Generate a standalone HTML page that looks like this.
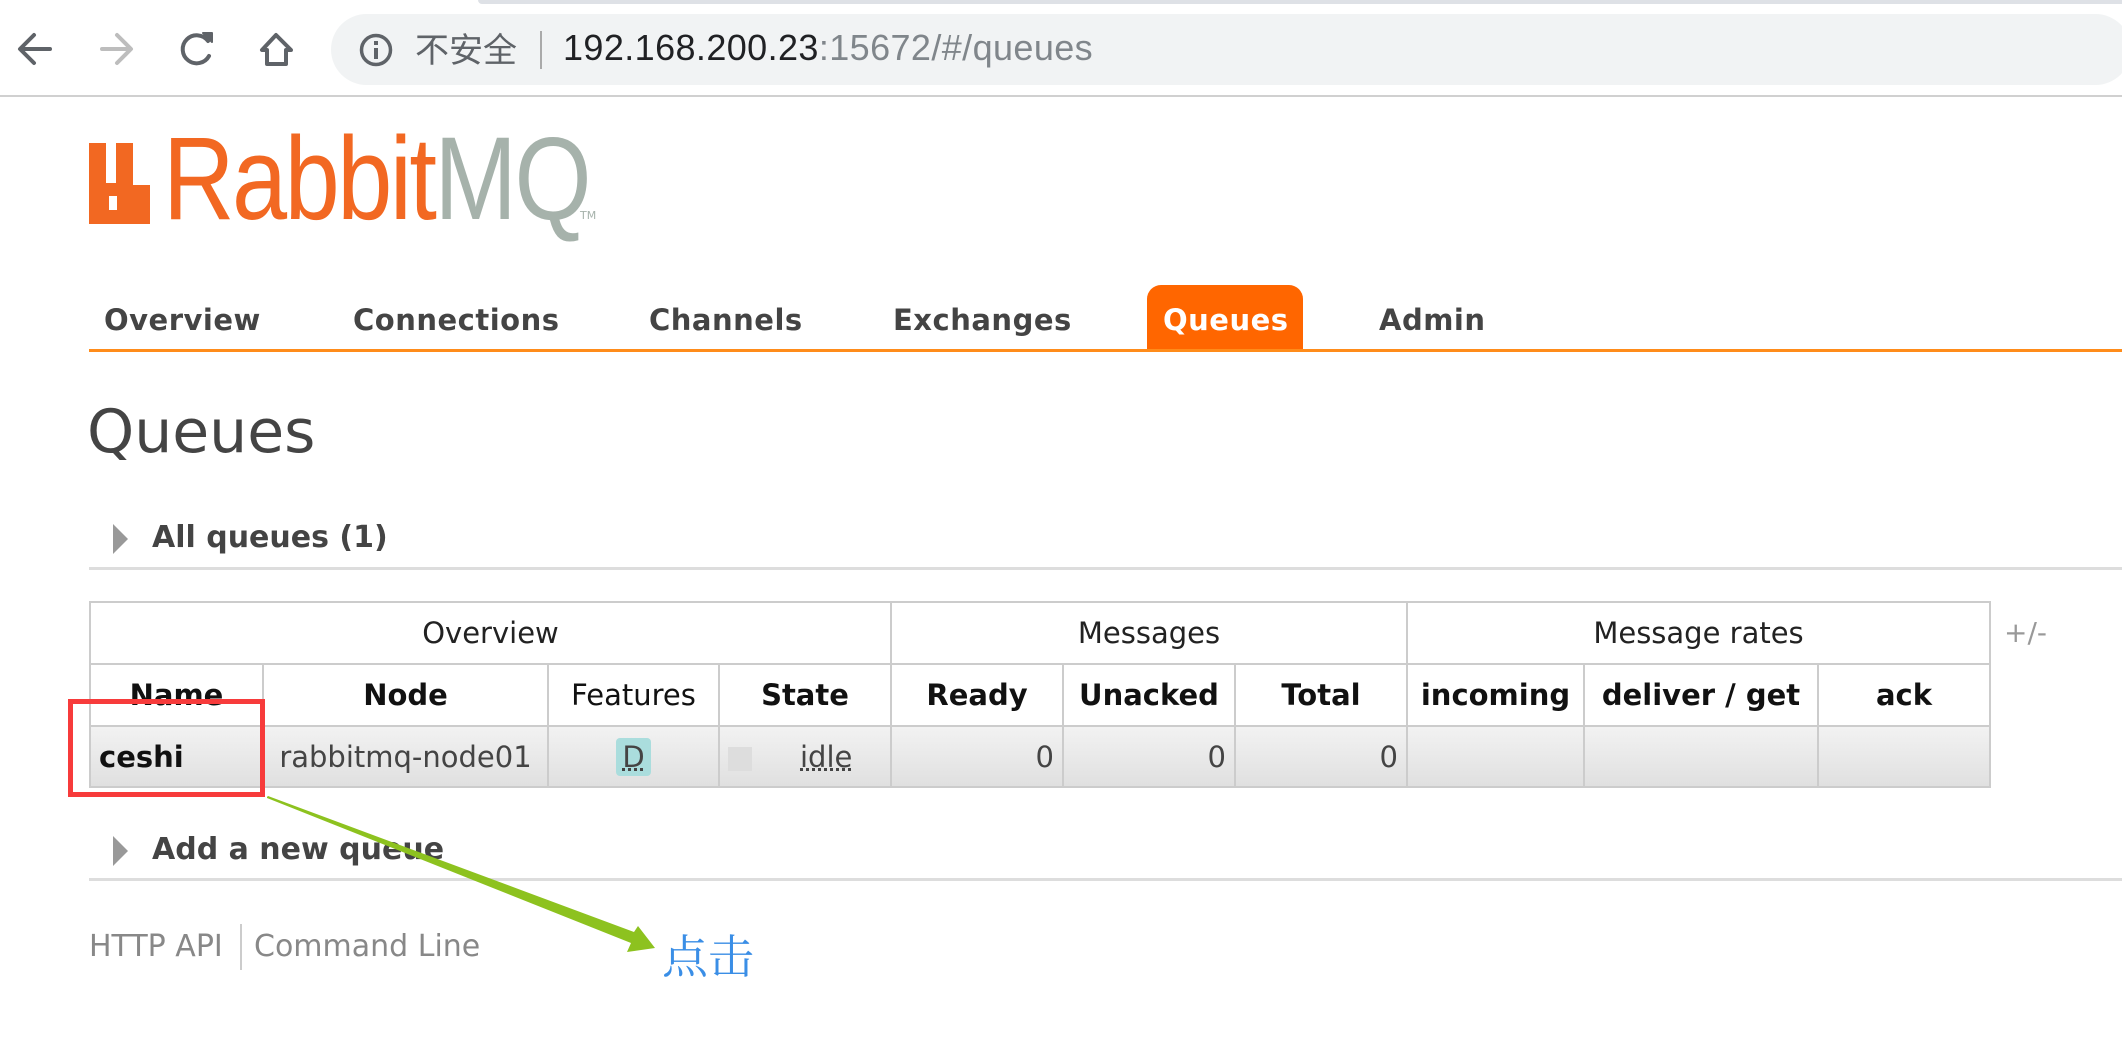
<!DOCTYPE html>
<html><head><meta charset="utf-8">
<style>
*{margin:0;padding:0;box-sizing:border-box}
body{width:2122px;height:1038px;background:#fff;position:relative;overflow:hidden;font-family:"DejaVu Sans","Liberation Sans",sans-serif;color:#444}
.abs{position:absolute}
.tab{position:absolute;top:303px;font-weight:bold;font-size:29px;color:#444;letter-spacing:0.5px}
table{position:absolute;left:89px;top:601px;border-collapse:collapse;font-size:29px}
td,th{border:2px solid #ccc;text-align:center;padding:0 8px;white-space:nowrap}
tr.h1 td{height:62px;font-weight:normal;color:#222}
tr.h2 th{height:62px;color:#111}
tr.d td{height:61px;background:linear-gradient(#f2f2f2,#e0e0e0);color:#444}
</style></head><body>
<div class="abs" style="left:478px;top:0;width:1644px;height:4px;background:#dee1e6;border-radius:0 0 0 6px"></div>
<svg class="abs" style="left:0;top:0" width="330" height="96">
 <g fill="none" stroke-width="4" stroke-linecap="round" stroke-linejoin="round">
  <path d="M50 49H21M34 35L20 49L34 63" stroke="#5f6368"/>
  <path d="M102 49H130M117 35L131 49L117 63" stroke="#bdbdbd"/>
  <path d="M208 41A14 14 0 1 0 209 56" stroke="#5f6368"/>
  <path d="M203 33L212 33L212 42Z" fill="#5f6368" stroke="#5f6368" stroke-width="2"/>
  <path d="M276 35L262 50H267V64H286V50H291Z" stroke="#5f6368"/>
 </g>
</svg>
<div class="abs" style="left:331px;top:14px;width:1800px;height:71px;background:#f1f3f4;border-radius:36px"></div>
<svg class="abs" style="left:358px;top:32px" width="36" height="36"><circle cx="18" cy="18" r="14.5" fill="none" stroke="#5f6368" stroke-width="3.5"/><rect x="16" y="16" width="4" height="11" fill="#5f6368"/><rect x="16" y="9" width="4" height="4" fill="#5f6368"/></svg>
<div class="abs" style="left:415px;top:25px;font-size:34px;color:#5f6368;font-family:'Noto Sans CJK SC',sans-serif;line-height:46px">不安全</div>
<div class="abs" style="left:540px;top:31px;width:2px;height:38px;background:#aaa"></div>
<div class="abs" style="left:563px;top:24px;font-size:36px;line-height:48px;font-family:'Liberation Sans',sans-serif;color:#202124;letter-spacing:0.4px">192.168.200.23<span style="color:#80868b">:15672/#/queues</span></div>
<div class="abs" style="left:0;top:95px;width:2122px;height:2px;background:#d0d0d0"></div>
<svg class="abs" style="left:89px;top:138px" width="80" height="87"><path d="M0 5H17V45H27V5H44V47H61V86H0Z" fill="#f26822"/><rect x="20" y="58" width="8" height="14" fill="#fff"/></svg>
<div class="abs" style="left:163px;top:120px;font-size:118px;line-height:118px;font-family:'Liberation Sans',sans-serif;letter-spacing:-3px;transform:scaleX(0.84);transform-origin:left"><span style="color:#f26822">Rabbit</span><span style="color:#a6b2ab">MQ</span></div>
<div class="abs" style="left:580px;top:209px;font-size:11px;color:#a6b2ab">TM</div>
<div class="tab" style="left:104px">Overview</div>
<div class="tab" style="left:353px">Connections</div>
<div class="tab" style="left:649px">Channels</div>
<div class="tab" style="left:893px">Exchanges</div>
<div class="abs" style="left:1147px;top:285px;width:156px;height:66px;background:#ff6600;border-radius:14px 14px 0 0"></div>
<div class="tab" style="left:1163px;color:#fff">Queues</div>
<div class="tab" style="left:1379px">Admin</div>
<div class="abs" style="left:89px;top:349px;width:2033px;height:3px;background:#ff8c1a"></div>
<div class="abs" style="left:87px;top:396px;font-size:60px;color:#444;line-height:72px">Queues</div>
<svg class="abs" style="left:113px;top:524px" width="16" height="30"><path d="M0 0L15 15L0 30Z" fill="#999"/></svg>
<div class="abs" style="left:152px;top:520px;font-size:30px;font-weight:bold;color:#444">All queues (1)</div>
<div class="abs" style="left:89px;top:567px;width:2033px;height:3px;background:#ddd"></div>
<table>
<tr class="h1"><td colspan="4">Overview</td><td colspan="3">Messages</td><td colspan="3">Message rates</td></tr>
<tr class="h2"><th style="width:173px">Name</th><th style="width:285px">Node</th><th style="width:171px;font-weight:normal">Features</th><th style="width:172px">State</th><th style="width:172px">Ready</th><th style="width:172px">Unacked</th><th style="width:172px">Total</th><th style="width:177px">incoming</th><th style="width:234px">deliver / get</th><th style="width:172px">ack</th></tr>
<tr class="d"><td style="text-align:left;font-weight:bold;color:#111">ceshi</td><td>rabbitmq-node01</td><td><span style="background:#aadddd;padding:2px 6px;border-radius:4px;text-decoration:underline dotted">D</span></td><td style="text-align:left"><span style="display:inline-block;width:24px;height:24px;background:#ddd;vertical-align:middle;margin-right:48px"></span><span style="text-decoration:underline dotted">idle</span></td><td style="text-align:right">0</td><td style="text-align:right">0</td><td style="text-align:right">0</td><td></td><td></td><td></td></tr>
</table>
<div class="abs" style="left:2004px;top:616px;font-size:28px;color:#999">+/-</div>
<div class="abs" style="left:68px;top:699px;width:197px;height:98px;border:5px solid #f73b3b"></div>
<svg class="abs" style="left:113px;top:836px" width="16" height="30"><path d="M0 0L15 15L0 30Z" fill="#999"/></svg>
<div class="abs" style="left:152px;top:832px;font-size:30px;font-weight:bold;color:#444">Add a new queue</div>
<div class="abs" style="left:89px;top:878px;width:2033px;height:3px;background:#ddd"></div>
<div class="abs" style="left:89px;top:929px;font-size:30px;color:#888">HTTP API</div>
<div class="abs" style="left:240px;top:924px;width:2px;height:46px;background:#ccc"></div>
<div class="abs" style="left:254px;top:929px;font-size:30px;color:#888">Command Line</div>
<svg class="abs" style="left:0;top:0" width="2122" height="1038"><path d="M267 797L268 796L634 932L638 926L655 948L627 952L631 943L267 798Z" fill="#8dc21f"/></svg>
<div class="abs" style="left:662px;top:926px;font-size:46px;color:#3a8ee6;font-family:'Noto Serif CJK SC',serif;line-height:56px">点击</div>
</body></html>
